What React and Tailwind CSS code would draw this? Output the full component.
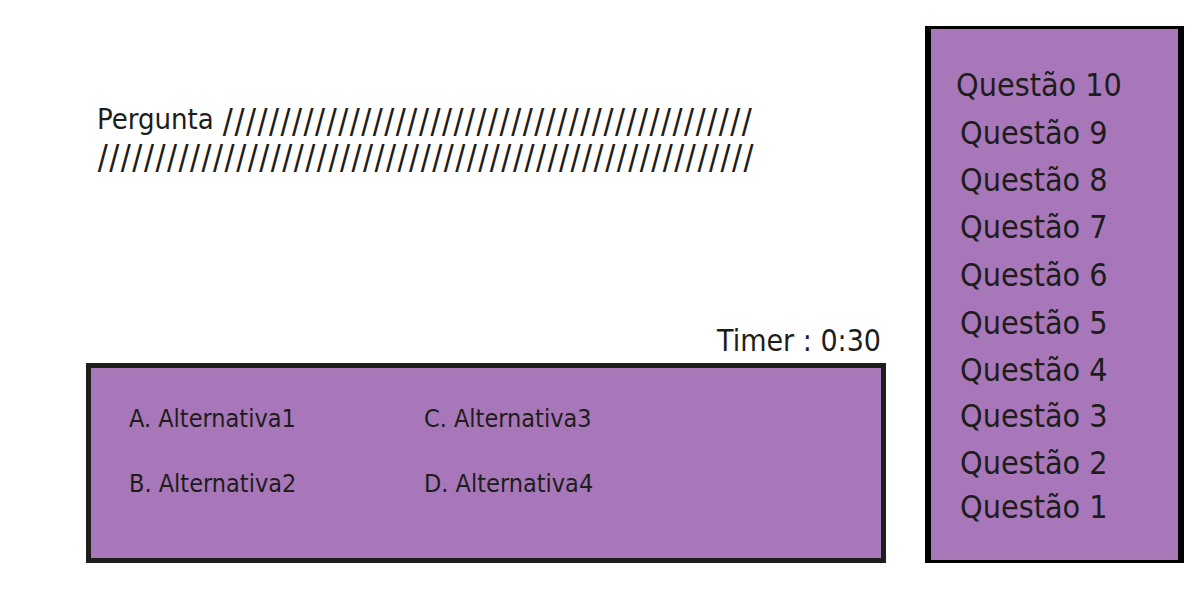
const questions = [
  { n: 10, row: 'h-12' },
  { n: 9, row: 'h-12 pl-1' },
  { n: 8, row: 'h-[46px] pl-1' },
  { n: 7, row: 'h-12 pl-1' },
  { n: 6, row: 'h-12 pl-1' },
  { n: 5, row: 'h-12 pl-1' },
  { n: 4, row: 'h-[46px] pl-1' },
  { n: 3, row: 'h-[46px] pl-1' },
  { n: 2, row: 'h-12 pl-1' },
  { n: 1, row: 'h-10 pl-1' },
];
const alternatives = ['A. Alternativa1', 'C. Alternativa3', 'B. Alternativa2', 'D. Alternativa4'];

function Slashes({ count }) {
  return <span className="align-middle font-[Inter,sans-serif] text-[32px] leading-8">{'/'.repeat(count)}</span>;
}

export default function App() {
  return (
    <div className="flex min-h-screen items-stretch gap-[39px] bg-white pt-[26px] pr-4 pb-[37px] pl-[86px] font-['DejaVu_Sans_Condensed','DejaVu_Sans',sans-serif] text-[#1d1d1b]">
      <main className="flex min-w-0 flex-1 flex-col">
        <h1 className="mt-[75px] pl-[11px] text-[29px] leading-9">
          Pergunta <Slashes count={46} />
          <br />
          <Slashes count={57} />
        </h1>
        <p className="mt-auto pr-[5px] text-right text-[30px] leading-[44px]">Timer : 0:30</p>
        <section className="grid h-[200px] grid-cols-[295px_1fr] content-start border-[5px] border-[#1d1d1b] bg-[#a877b9] pt-[18px] pl-[38px]">
          {alternatives.map((a) => (
            <button key={a} type="button" className="h-[65px] text-left text-[25px]">{a}</button>
          ))}
        </section>
      </main>
      <aside className="w-[259px] border-x-[6px] border-y-[3px] border-black bg-[#a877b9] pt-8 pl-[25px]">
        <ol>
          {questions.map((q) => (
            <li key={q.n} className={`flex items-center text-[32px] ${q.row}`}>Questão {q.n}</li>
          ))}
        </ol>
      </aside>
    </div>
  );
}
